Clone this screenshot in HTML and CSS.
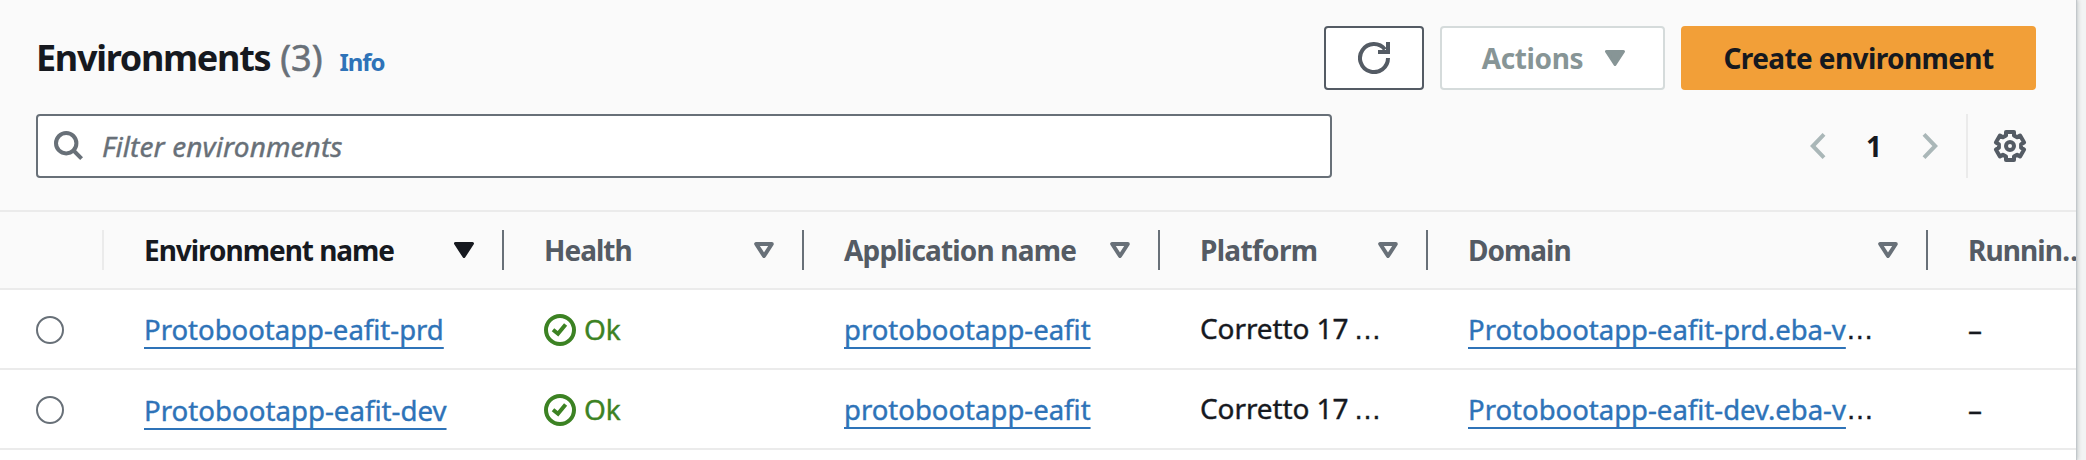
FILE: index.html
```html
<!DOCTYPE html>
<html lang="en">
<head>
<meta charset="utf-8">
<title>Environments</title>
<link rel="stylesheet" href="styles.css">
</head>
<body>
<svg class="defs" aria-hidden="true">
  <symbol id="sort" viewBox="0 0 20 16"><path d="M2.2 2h15.6L10 14z" fill="none" stroke="currentColor" stroke-width="4" stroke-linejoin="round"/></symbol>
  <symbol id="solid" viewBox="0 0 20 16"><path d="M1.5 1.5h17L10 14.5z" fill="currentColor" stroke="currentColor" stroke-width="3" stroke-linejoin="round"/></symbol>
  <symbol id="ok" viewBox="0 0 32 32"><g fill="none" stroke="currentColor" stroke-width="4"><circle cx="16" cy="16" r="14"/><path d="M9 15.8l5 4 7.6-9.2"/></g></symbol>
</svg>
<main class="panel">
  <header class="top">
    <div class="title-row">
      <h1>Environments</h1><span class="count">(3)</span><a class="info">Info</a>
      <div class="actions">
        <button class="btn refresh" aria-label="Refresh">
          <svg width="32" height="32" viewBox="0 0 32 32" fill="none" stroke="currentColor" stroke-width="4"><path d="M30 16A14 14 0 1 1 27 7.4"/><path d="M30 0v10H20"/></svg>
        </button>
        <button class="btn menu"><span>Actions</span><svg width="20" height="16"><use href="#solid"/></svg></button>
        <button class="btn primary">Create environment</button>
      </div>
    </div>
    <div class="filter-row">
      <div class="search">
        <svg width="30" height="30" viewBox="0 0 30 30" fill="none" stroke="currentColor" stroke-width="4"><circle cx="12.2" cy="12.2" r="10.2"/><path d="M19 19l8.6 8.6"/></svg>
        <span>Filter environments</span>
      </div>
      <div class="pager">
        <svg class="chev" width="16" height="28" viewBox="0 0 16 28" fill="none" stroke="currentColor" stroke-width="4"><path d="M14 2.3L2.8 14 14 25.7"/></svg>
        <span class="page">1</span>
        <svg class="chev" width="16" height="28" viewBox="0 0 16 28" fill="none" stroke="currentColor" stroke-width="4"><path d="M2 2.3L13.2 14 2 25.7"/></svg>
      </div>
      <div class="settings">
        <svg width="34" height="34" viewBox="-17 -17 34 34" fill="none" stroke="currentColor" stroke-width="4" stroke-linejoin="round"><path d="M-4-14H4V-10.5L7.1-8.7 10.1-10.5 14.1-3.5 11.1-1.8V1.8L14.1 3.5 10.1 10.5 7.1 8.7 4 10.5V14H-4V10.5L-7.1 8.7-10.1 10.5-14.1 3.5-11.1 1.8V-1.8L-14.1-3.5-10.1-10.5-7.1-8.7-4-10.5z"/><circle r="4"/></svg>
      </div>
    </div>
  </header>
  <div class="row head">
    <div class="cell light"></div>
    <div class="cell sorted"><span class="t-name">Environment name</span><svg width="20" height="16"><use href="#solid"/></svg></div>
    <div class="cell"><span class="t-health">Health</span><svg width="20" height="16"><use href="#sort"/></svg></div>
    <div class="cell"><span class="t-app">Application name</span><svg width="20" height="16"><use href="#sort"/></svg></div>
    <div class="cell"><span class="t-platform">Platform</span><svg width="20" height="16"><use href="#sort"/></svg></div>
    <div class="cell"><span class="t-domain">Domain</span><svg width="20" height="16"><use href="#sort"/></svg></div>
    <div class="cell last"><span class="t-running">Runnin…</span></div>
  </div>
  <div class="row">
    <div class="cell pick"><span class="radio"></span></div>
    <div class="cell"><a class="link">Protobootapp-eafit-prd</a></div>
    <div class="cell status"><svg width="32" height="32"><use href="#ok"/></svg><span class="text">Ok</span></div>
    <div class="cell"><a class="link">protobootapp-eafit</a></div>
    <div class="cell"><span class="text">Corretto 17 <span class="dots">…</span></span></div>
    <div class="cell"><a class="link">Protobootapp-eafit-prd.eba-v</a><span class="dots">…</span></div>
    <div class="cell"><span class="text">–</span></div>
  </div>
  <div class="row">
    <div class="cell pick"><span class="radio"></span></div>
    <div class="cell"><a class="link dev">Protobootapp-eafit-dev</a></div>
    <div class="cell status"><svg width="32" height="32"><use href="#ok"/></svg><span class="text">Ok</span></div>
    <div class="cell"><a class="link">protobootapp-eafit</a></div>
    <div class="cell"><span class="text">Corretto 17 <span class="dots">…</span></span></div>
    <div class="cell"><a class="link">Protobootapp-eafit-dev.eba-v</a><span class="dots">…</span></div>
    <div class="cell"><span class="text">–</span></div>
  </div>
</main>
</body>
</html>
```
FILE: styles.css
```css
* { box-sizing: border-box; }
body {
  margin: 0;
  height: 460px;
  overflow: hidden;
  background: #f2f3f3;
  color: #16191f;
  font: 28px/38px "Noto Sans", "Open Sans", sans-serif;
}
.defs { display: none; }
svg { display: block; flex: none; }
.panel {
  width: 2076px;
  height: 460px;
  overflow: hidden;
  background: #fff;
  box-shadow: 0 0 1px 1px #c2c7cb, 2px 0 4px rgba(0, 28, 36, .18);
}
.top {
  height: 212px;
  padding: 26px 40px 0 36px;
  background: #fafafa;
  border-bottom: 2px solid #ebebeb;
}
.title-row { display: flex; align-items: baseline; height: 64px; }
h1 { margin: 0; font-size: 36px; line-height: 63px; letter-spacing: -1.3px; }
.count {
  margin-left: 10px;
  font-size: 36px;
  line-height: 63px;
  color: #687078;
  -webkit-text-stroke: .6px currentColor;
}
.info { margin-left: 17px; font-size: 24px; font-weight: 700; letter-spacing: -1.1px; color: #2e73b8; }
.actions { display: flex; gap: 16px; margin-left: auto; align-self: flex-start; }
.btn {
  display: flex;
  align-items: center;
  justify-content: center;
  height: 64px;
  padding: 0 0 1px;
  border: 2px solid #545b64;
  border-radius: 4px;
  background: #fff;
  color: #545b64;
  font: 700 28px/38px "Noto Sans", "Open Sans", sans-serif;
}
.refresh { width: 100px; padding: 0; }
.menu {
  width: 225px;
  gap: 22px;
  padding-left: 2px;
  border-color: #d5dbdb;
  color: #879596;
  letter-spacing: -.4px;
}
.primary {
  width: 355px;
  border-color: #f29f38;
  background: #f29f38;
  color: #16191f;
  letter-spacing: -.6px;
}
.filter-row { display: flex; align-items: center; margin-top: 24px; height: 64px; }
.search {
  display: flex;
  align-items: center;
  width: 1296px;
  height: 64px;
  padding-left: 16px;
  gap: 18px;
  border: 2px solid #687078;
  border-radius: 4px;
  background: #fff;
  color: #687078;
  font-style: italic;
  letter-spacing: .1px;
  -webkit-text-stroke: .4px currentColor;
}
.pager { display: flex; align-items: center; margin-left: auto; }
.chev { color: #aab7b8; }
.page { width: 96px; text-align: center; font-weight: 700; }
.settings {
  display: flex;
  align-items: center;
  height: 64px;
  margin-left: 28px;
  padding: 0 9px 0 25px;
  border-left: 2px solid #ebebeb;
  color: #545b64;
}
.row {
  display: grid;
  grid-template-columns: 104px 400px 300px 356px 268px 500px 200px;
  height: 80px;
  border-bottom: 2px solid #ebebeb;
}
.cell {
  display: flex;
  align-items: center;
  padding: 2px 0 0 40px;
  white-space: nowrap;
  -webkit-text-stroke: .4px currentColor;
}
.head { height: 78px; background: #fafafa; color: #545b64; font-weight: 700; }
.head .cell {
  height: 40px;
  margin-top: 18px;
  padding: 0 28px 0 40px;
  border-right: 2px solid #687078;
  -webkit-text-stroke: 0;
}
.head .cell span { margin-bottom: 1px; }
.head svg { margin-left: auto; color: #687078; }
.head .light { border-right-color: #ebebeb; }
.head .last { padding-right: 0; border-right: 0; }
.head .sorted, .head .sorted svg { color: #16191f; }
.t-name { letter-spacing: -1.03px; }
.t-health { letter-spacing: -1px; }
.t-app { letter-spacing: -.82px; }
.t-platform { letter-spacing: -.68px; }
.t-domain { letter-spacing: -1px; }
.t-running { letter-spacing: -.9px; }
.row .pick { padding-left: 36px; }
.radio { width: 28px; height: 28px; border: 2px solid #687078; border-radius: 50%; }
.link {
  color: #2e73b8;
  font-size: 27.5px;
  text-decoration: underline 2px;
  text-underline-offset: 7px;
  text-decoration-skip-ink: none;
}
.dev { font-size: 27.65px; }
.status { gap: 8px; color: #3c8223; }
.text { margin-bottom: 2px; letter-spacing: -.1px; }
.dots { font-family: "Liberation Sans", sans-serif; }
.text .dots { margin-left: -2px; }
```
